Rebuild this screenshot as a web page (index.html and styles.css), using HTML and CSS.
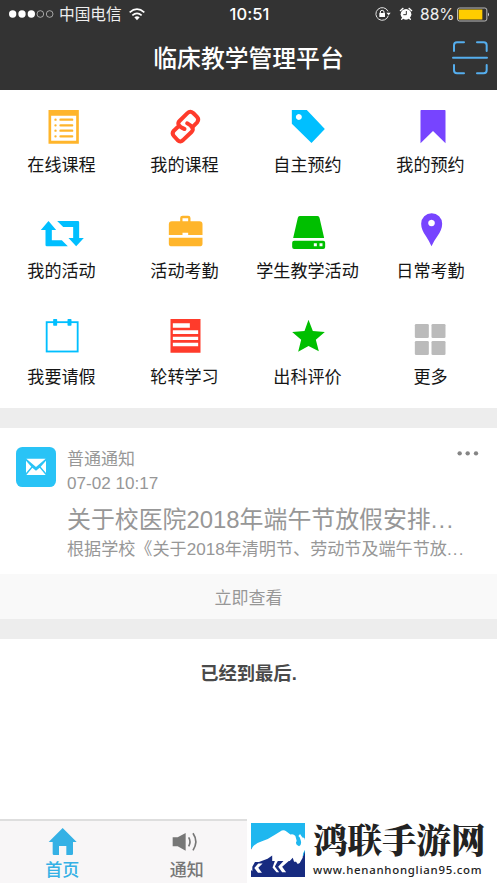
FILE: index.html
```html
<!DOCTYPE html>
<html lang="zh-CN">
<head>
<meta charset="utf-8">
<title>临床教学管理平台</title>
<link rel="stylesheet" href="styles.css">
</head>
<body>
<div class="app">
  <header class="header">
    <div class="status">
      <div class="status-left">
        <svg class="signal" viewBox="24 24 138 36"><g fill="#fff"><circle cx="38" cy="42" r="11"/><circle cx="66" cy="42" r="11"/><circle cx="94" cy="42" r="11"/></g><g fill="none" stroke="#ddd" stroke-width="2"><circle cx="121" cy="42" r="10"/><circle cx="149" cy="42" r="10"/></g></svg>
        <span class="carrier">中国电信</span>
        <svg class="wifi" viewBox="384 18 54 42"><g fill="none" stroke="#fff" stroke-width="5"><path d="M389 34Q411 15 433 34"/><path d="M397 43Q411 31 425 43"/></g><path d="M403 49Q411 43 419 49L411 58Z" fill="#fff"/></svg>
      </div>
      <span class="time">10:51</span>
      <div class="status-right">
        <svg class="lock" viewBox="384 18 48 48"><path d="M423 34A19 19 0 1 0 424 47" fill="none" stroke="#e5e5e5" stroke-width="3"/><path d="M418 38H431L425 46Z" fill="#fff"/><rect x="397" y="39" width="17" height="12" rx="1" fill="#fff"/><path d="M400 40V36Q400 31 405.500 31T411 36V40" fill="none" stroke="#fff" stroke-width="3"/></svg>
        <svg class="alarm" viewBox="456 18 42 48"><circle cx="477" cy="43" r="16" fill="#fff"/><g fill="none" stroke="#fff" stroke-width="4" stroke-linecap="round"><path d="M460 32L468 25M494 32L486 25M467 55L464 58M487 55L490 58"/></g><path d="M478 33V44H469" fill="none" stroke="#333" stroke-width="3"/></svg>
        <span class="percent">88%</span>
        <svg class="battery" viewBox="630 20 99 44"><rect x="631.500" y="22.500" width="88" height="39" rx="6" fill="none" stroke="#bbb" stroke-width="3"/><rect x="635" y="27" width="71" height="30" fill="#fc0"/><path d="M723 36Q729 42 723 48Z" fill="#ddd"/></svg>
      </div>
    </div>
    <div class="titlebar">
      <h1>临床教学管理平台</h1>
      <svg class="scan" viewBox="615 123 108 102"><g fill="none" stroke="#55aeee" stroke-width="6" stroke-linecap="round"><path d="M621 153V136Q621 127 630 127H651M690 127H710Q719 127 719 136V153M621 195V211Q621 220 630 220H651M690 220H710Q719 220 719 211V195M618 173.500H720"/></g></svg>
    </div>
  </header>

  <main>
    <section class="menu">
      <a class="item"><svg viewBox="112.500 24 144 144"><path d="M144 45H235V146H144ZM152 62V137H227V62Z" fill="#ffb52b" fill-rule="evenodd"/><g stroke="#ffb52b" stroke-width="7" stroke-linecap="round"><path d="M180 74H215M180 91H215M180 107H215M180 124H215M165 74h.1M165 91h.1M165 107h.1M165 124h.1"/></g></svg><span>在线课程</span></a>
      <a class="item"><svg viewBox="481.500 24 144 144"><g fill="none" stroke="#ff3b2b" stroke-width="12" stroke-linecap="round" stroke-linejoin="round"><path d="M552 102Q538 97 534 89Q532 83 537 78L560 55Q569 46 578 54L589 65Q597 73 590 82L578 94"/><path d="M560 85Q572 91 576 99Q579 105 573 111L549 134Q540 144 531 135L520 123Q513 115 520 107L531 97"/></g></svg><span>我的课程</span></a>
      <a class="item"><svg viewBox="109.500 24 144 144"><path d="M133 45H178L232 102L192 144L133 86ZM154 57a9 9 0 1 0 .1 0Z" fill="#00bfff" fill-rule="evenodd"/></svg><span>自主预约</span></a>
      <a class="item"><svg viewBox="478.500 24 144 144"><path d="M519 47Q519 45 521 45H592Q594 45 594 47V145L556.500 108L519 145Z" fill="#7744ff"/></svg><span>我的预约</span></a>

      <a class="item"><svg viewBox="112.500 27 144 144"><g fill="#00bfff"><path d="M144 63L167 90H154V121H184L202 139H139Q135 139 135 135V90H121Z"/><path d="M170 63H232Q236 63 236 67V114H250L227 139L204 114H218V81H188Z"/></g></svg><span>我的活动</span></a>
      <a class="item"><svg viewBox="481.500 27 144 144"><g fill="#ffb52b"><path d="M539 64V54Q539 47 546 47H563Q570 47 570 54V64H597Q606 64 606 73V105H563V98H546V105H505V73Q505 64 514 64ZM546 64H563V55H546Z" fill-rule="evenodd"/><path d="M505 113H606V131Q606 139 597 139H514Q505 139 505 131Z"/></g></svg><span>活动考勤</span></a>
      <a class="item"><svg viewBox="109.500 27 144 144"><path d="M157 48H210Q215 48 216 53L230 114H137L151 53Q152 48 157 48ZM140 122H227Q233 122 233 128V141Q233 147 227 147H140Q134 147 134 141V128Q134 122 140 122ZM199 130V139H208V130ZM216 130V139H225V130Z" fill="#00bf00" fill-rule="evenodd"/></svg><span>学生教学活动</span></a>
      <a class="item"><svg viewBox="478.500 27 144 144"><path d="M552 139Q545 123 535 108Q521 88 521 71A31.500 31.500 0 0 1 584 71Q584 88 570 108Q559 123 552 139ZM552 59a10 10 0 1 0 .1 0Z" fill="#7744ff" fill-rule="evenodd"/></svg><span>日常考勤</span></a>

      <a class="item"><svg viewBox="112.500 30 144 144"><rect x="138.500" y="51.500" width="93" height="88" fill="none" stroke="#00bfff" stroke-width="5.500"/><g fill="#00bfff"><rect x="158" y="42" width="12" height="20" rx="2"/><rect x="201" y="42" width="12" height="20" rx="2"/></g></svg><span>我要请假</span></a>
      <a class="item"><svg viewBox="481.500 30 144 144"><path d="M510 42H600V143H510ZM517 55V68H568V55ZM517 76V87H593V76ZM517 95V105H593V95ZM517 113V124H593V113Z" fill="#ff3b2b" fill-rule="evenodd"/></svg><span>轮转学习</span></a>
      <a class="item"><svg viewBox="109.500 30 144 144"><path d="M183 44L196 78L232 81L205 104L214 139L183 123L152 140L161 104L134 81L171 78Z" fill="#00bf00"/></svg><span>出科评价</span></a>
      <a class="item"><svg viewBox="478.500 30 144 144"><g fill="#bbb"><rect x="502" y="57" width="42" height="42" rx="4"/><rect x="552" y="57" width="42" height="42" rx="4"/><rect x="502" y="108" width="42" height="42" rx="4"/><rect x="552" y="108" width="42" height="42" rx="4"/></g></svg><span>更多</span></a>
    </section>

    <section class="notice">
      <div class="notice-body">
        <svg class="mail" viewBox="48 52 120 120"><rect x="48" y="52" width="120" height="120" rx="19" fill="#29c3f6"/><path d="M79 87H137L108 112ZM78 93L94 111L78 130ZM138 93V130L122 111ZM97 114L108 123L119 114L137 136H79Z" fill="#fff"/></svg>
        <div class="notice-text">
          <div class="notice-top">
            <span class="kind">普通通知</span>
            <svg class="dots" viewBox="630 60 66 18"><g fill="#858585"><circle cx="638" cy="70" r="6.500"/><circle cx="662" cy="70" r="6.500"/><circle cx="687" cy="70" r="6.500"/></g></svg>
          </div>
          <div class="date">07-02 10:17</div>
          <h2>关于校医院2018年端午节放假安排<span class="ell">...</span></h2>
          <p>根据学校《关于2018年清明节、劳动节及端午节放<span class="ell">...</span></p>
        </div>
      </div>
      <a class="view">立即查看</a>
    </section>
    <div class="end">已经到最后.</div>
  </main>

  <footer class="footer">
    <nav class="tabs">
      <a class="tab active"><svg viewBox="141 48 96 93"><path d="M191 54L233 96H222V131Q222 135 218 135H202V108H180V135H165Q161 135 161 131V96H149Z" fill="#35b1e5"/></svg><span>首页</span></a>
      <a class="tab"><svg viewBox="517 48 96 93"><path d="M522 82H537L561 69V122L537 109H522Z" fill="#777"/><path d="M570 82Q578 95 570 109M583 70Q600 95 583 121" fill="none" stroke="#777" stroke-width="5"/></svg><span>通知</span></a>
    </nav>
    <div class="brand">
      <svg class="bull" viewBox="32 40 163 163"><rect x="32" y="40" width="163" height="163" fill="#1fb7ef"/><path d="M32 118L60 110L190 140L195 125V203H32Z" fill="#172b80"/><path d="M32 120Q42 101 65 95Q86 88 103 76L125 63Q132 60 139 66L151 75Q160 72 166 79L170 94Q163 104 177 110Q186 106 182 92Q180 82 175 79L180 73L187 84Q195 82 195 92V121L189 132L188 145L179 161L173 164L168 157H162L158 145L149 155H113L104 171L117 189H109L97 174L104 155H96V138L82 148L56 158H44L36 172V186L32 182Z" fill="#fff"/><path d="M54 162H67L54 175L65 190H53L42 176ZM130 155H146L126 172L138 189H126L114 172Z" fill="#fff"/></svg>
      <div class="brand-text"><strong>鸿联手游网</strong><span>www.henanhonglian95.com</span></div>
    </div>
  </footer>
</div>
</body>
</html>
```

FILE: styles.css
```css
* { box-sizing: border-box; }
body { margin: 0; font-family: "Liberation Sans", "Noto Sans CJK SC", sans-serif; background: #fff; color: #151515; }
svg { display: block; flex: none; }
h1, h2, p { margin: 0; font-weight: 400; }
.app { display: flex; flex-direction: column; height: 883px; overflow: hidden; }

.header { height: 90px; background: #333; color: #fff; }
.status { display: grid; grid-template-columns: 1fr auto 1fr; height: 28px; padding: 0 7px 0 8px; align-items: center; }
.status-left, .status-right { display: flex; align-items: center; }
.status-right { justify-content: flex-end; }
.signal { width: 46px; height: 12px; }
.carrier { margin-left: 5px; padding-top: 1px; font-size: 15.7px; line-height: 24px; color: #eee; }
.wifi { width: 18px; height: 14px; margin-left: 6px; }
.time { padding-left: 1px; font: 500 16.5px/24px Inter, sans-serif; letter-spacing: .1px; }
.lock { width: 16px; height: 16px; }
.alarm { width: 14px; height: 16px; margin-left: 8px; }
.percent { width: 34px; margin: 0 3px 0 7px; padding-top: 1px; font: 400 15.6px/24px Inter, sans-serif; color: #eee; white-space: nowrap; }
.battery { width: 33px; height: 15px; }
.titlebar { display: grid; grid-template-columns: 1fr auto 1fr; align-items: center; height: 60px; padding-right: 9px; padding-left: 9px; }
.titlebar h1 { grid-column: 2; padding-top: 1px; font-size: 23.8px; line-height: 36px; font-weight: 500; }
.scan { width: 36px; height: 34px; justify-self: end; }

.menu { display: grid; grid-template-columns: repeat(4, 123px); grid-auto-rows: 106px; }
.item { display: flex; flex-direction: column; align-items: center; padding-top: 13px; }
.item svg { width: 48px; height: 48px; }
.item span { margin-top: 3px; font-size: 17.1px; line-height: 24px; white-space: nowrap; }

.notice { border-top: 20px solid #ededed; border-bottom: 20px solid #ededed; color: #979797; }
.notice-body { display: flex; gap: 11px; height: 146px; padding: 20px 18px 0 16px; }
.mail { width: 40px; height: 40px; margin-top: -1px; }
.notice-text { flex: 1; min-width: 0; white-space: nowrap; }
.notice-top { display: flex; justify-content: space-between; height: 24px; }
.kind { font-size: 17px; line-height: 24px; }
.dots { width: 22px; height: 6px; margin-top: 2px; }
.date { font-size: 17.1px; line-height: 24px; }
.notice h2 { margin-top: 6px; font-size: 23.9px; line-height: 36px; }
.notice p { font-size: 17.1px; line-height: 24px; }
.ell { letter-spacing: 1.2px; }
.view { display: block; height: 45px; background: #f9f9f9; text-align: center; font-size: 17px; line-height: 49px; }
.end { padding-top: 22px; text-align: center; font-size: 18.3px; line-height: 26px; font-weight: 700; color: #4a4a4a; }

.footer { display: flex; height: 64px; margin-top: auto; }
.tabs { display: flex; width: 247px; border-top: 2px solid #dedede; background: #f8f6f7; }
.tab { display: flex; flex: none; flex-direction: column; align-items: center; width: 124.5px; padding-top: 5px; color: #777; }
.tab svg { width: 32px; height: 31px; }
.tab span { margin-top: 2px; font-size: 17px; line-height: 24px; font-weight: 500; }
.tab.active { color: #35b1e5; }
.brand { display: flex; flex: 1; padding: 4px 0 0 4px; background: #fff; }
.bull { width: 54px; height: 54px; }
.brand-text { display: flex; flex-direction: column; margin: -4px 0 0 8px; color: #222; white-space: nowrap; }
.brand strong { font: 900 34.5px/38px "Noto Serif CJK SC", "Noto Sans CJK SC", serif; }
.brand span { margin-top: 6px; font: 500 11.4px/14px "Noto Sans", sans-serif; letter-spacing: .74px; }
```
